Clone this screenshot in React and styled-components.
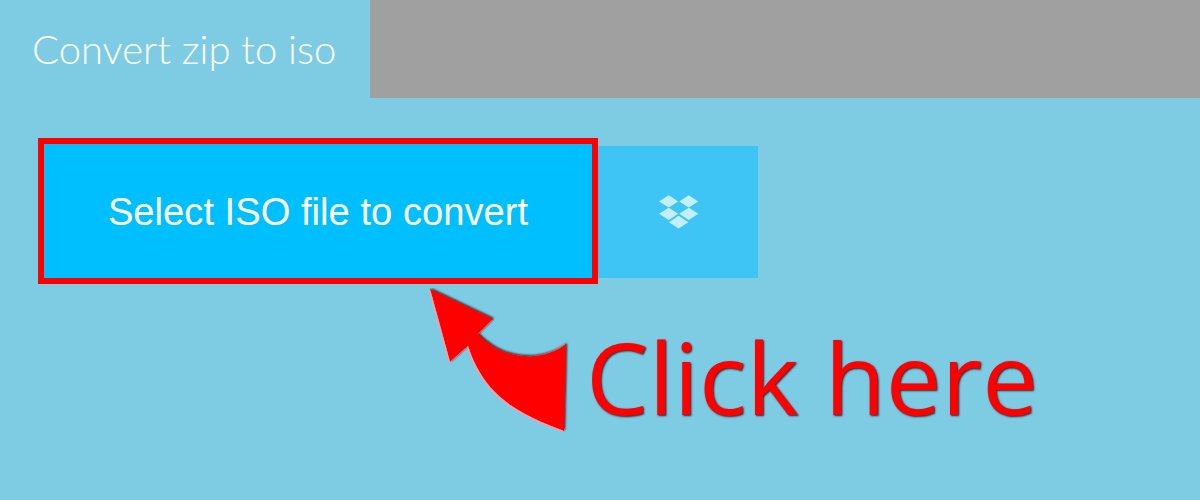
import styled, { createGlobalStyle } from 'styled-components';

const GlobalStyle = createGlobalStyle`
  html, body {
    margin: 0;
    padding: 0;
    background: #7ecbe4;
  }
`;

const Page = styled.div`
  width: 1200px;
  height: 500px;
  overflow: hidden;
  background: #7ecbe4;
`;

const Header = styled.div`
  display: flex;
  height: 98px;
`;

const Title = styled.h1`
  width: 370px;
  margin: 0;
  padding: 0 0 0 32px;
  box-sizing: border-box;
  font-family: 'Lato', sans-serif;
  font-size: 40px;
  font-weight: 300;
  line-height: 98px;
  color: #fff;
  white-space: nowrap;
`;

const HeaderFill = styled.div`
  flex: 1;
  background: #a0a0a0;
`;

const UploadRow = styled.div`
  display: flex;
  align-items: flex-start;
  padding: 40px 0 0 38px;
`;

const SelectButton = styled.button`
  width: 560px;
  height: 146px;
  box-sizing: border-box;
  border: 6px solid #ff0000;
  padding: 2px 0 0;
  background: #00bfff;
  color: #fff;
  font-family: 'Liberation Sans', Arial, sans-serif;
  font-size: 38.2px;
`;

const DropboxTile = styled.div`
  display: flex;
  align-items: center;
  justify-content: center;
  width: 160px;
  height: 132px;
  margin-top: 8px;
  padding-left: 2px;
  box-sizing: border-box;
  background: #3ec5f5;
`;

const Callout = styled.div`
  display: flex;
  align-items: flex-start;
  padding: 4px 0 0 429px;
`;

const ClickText = styled.span`
  margin: 39px 0 0 15px;
  font-family: 'Open Sans', sans-serif;
  font-size: 99.5px;
  line-height: 100px;
  color: #ff0000;
  text-shadow: 1px 1px 2px rgba(30, 20, 30, 0.9);
  white-space: nowrap;
`;

function DropboxIcon() {
  return (
    <svg width="40" height="34" viewBox="0 0 40 34" fill="#fff" fillOpacity="0.7">
      <polygon points="0,6.5 9.7,0.3 19.2,6.5 9.7,12.6" />
      <polygon points="20.2,6.5 29.7,0.3 39.4,6.5 29.7,12.6" />
      <polygon points="0,18.7 9.7,12.7 19.2,18.7 9.7,25" />
      <polygon points="20.2,18.7 29.7,12.7 39.4,18.7 29.7,25" />
      <polygon points="10,27.2 19.6,20.7 29.3,27.2 19.6,33.4" />
    </svg>
  );
}

function CurvedArrow() {
  return (
    <svg width="142" height="146" viewBox="0 0 142 146">
      <defs>
        <filter id="bevel" x="-10%" y="-10%" width="120%" height="120%">
          <feDropShadow in="SourceGraphic" dx="1" dy="-0.8" stdDeviation="0.8" floodColor="#1a0a10" floodOpacity="0.95" result="dark" />
          <feDropShadow in="SourceGraphic" dx="-1" dy="0.8" stdDeviation="0.6" floodColor="#ffa0a8" floodOpacity="0.95" result="light" />
          <feMerge>
            <feMergeNode in="dark" />
            <feMergeNode in="light" />
          </feMerge>
        </filter>
      </defs>
      <path
        d="M1 1 L64 31 L49 46 C62 59 76 67 96 68 C112 69 126 64 137 56 L135 143 C96 128 56 112 39 58 L21 74 Z"
        fill="#ff0000"
        filter="url(#bevel)"
      />
    </svg>
  );
}

export default function App() {
  return (
    <Page>
      <GlobalStyle />
      <Header>
        <Title>Convert zip to iso</Title>
        <HeaderFill />
      </Header>
      <UploadRow>
        <SelectButton>Select ISO file to convert</SelectButton>
        <DropboxTile>
          <DropboxIcon />
        </DropboxTile>
      </UploadRow>
      <Callout>
        <CurvedArrow />
        <ClickText>Click here</ClickText>
      </Callout>
    </Page>
  );
}
